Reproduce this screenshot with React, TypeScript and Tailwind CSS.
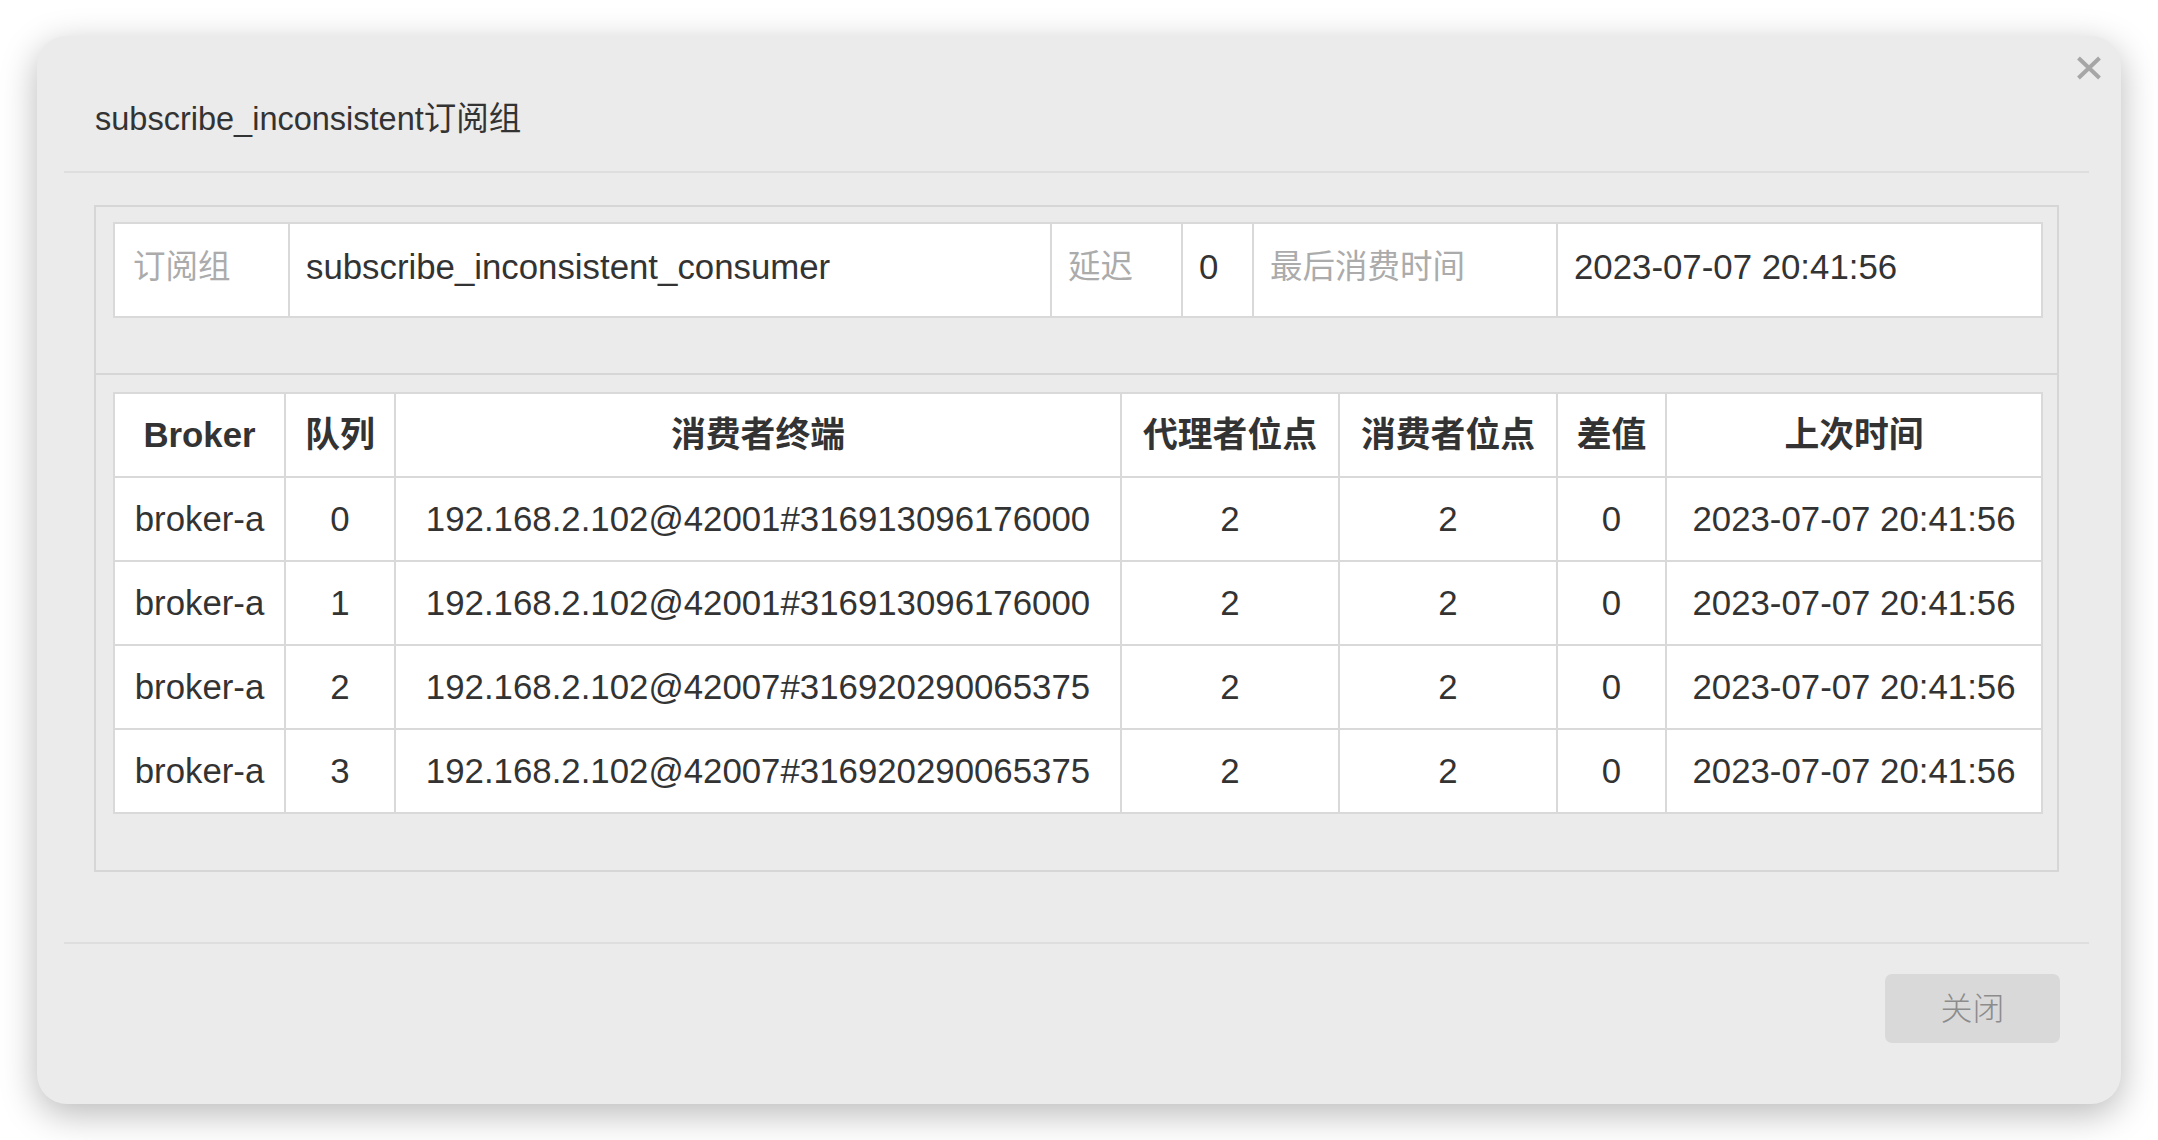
import React from "react";

const FONT = { fontFamily: '"Liberation Sans", Arial, "Noto Sans CJK SC", sans-serif' };

const rows = [
  { broker: "broker-a", q: "0", client: "192.168.2.102@42001#316913096176000" },
  { broker: "broker-a", q: "1", client: "192.168.2.102@42001#316913096176000" },
  { broker: "broker-a", q: "2", client: "192.168.2.102@42007#316920290065375" },
  { broker: "broker-a", q: "3", client: "192.168.2.102@42007#316920290065375" },
];

const headers = ["Broker", "队列", "消费者终端", "代理者位点", "消费者位点", "差值", "上次时间"];
const mainCols = [171, 110, 726, 218, 218, 109, 376];
const infoCols = [175, 762, 131, 71, 304, 485];

export default function App() {
  return (
    <div className="min-h-[1140px] w-[2158px] bg-white pt-[36px] pl-[37px] text-[#333333]" style={FONT}>
      <div className="relative w-[2084px] rounded-[30px] bg-[#ebebeb] pl-[27px] pr-[32px] shadow-[0_10px_36px_rgba(0,0,0,0.28)]">
        {/* close */}
        <button className="absolute top-[20px] right-[19px] flex h-[24px] w-[26px] items-center justify-center">
          <svg width="26" height="24" viewBox="0 0 26 24">
            <path d="M2.5 2 L23.5 22 M23.5 2 L2.5 22" stroke="#a6a6a6" strokeWidth="4" strokeLinecap="butt" />
          </svg>
        </button>

        {/* header */}
        <div className="h-[137px] border-b-2 border-[#dedede] pl-[31px] pt-[63px]">
          <div className="text-[32.5px] leading-[40px] text-[#333333]">subscribe_inconsistent订阅组</div>
        </div>

        {/* body */}
        <div className="px-[30px] pt-[32px] pb-[70px]">
          <div className="border-2 border-[#d6d6d6]">
            <div className="border-b-2 border-[#d6d6d6] px-[17px] pt-[15px] pb-[55px]">
              <table className="w-[1928px] table-fixed border-collapse bg-white text-[34.8px]">
                <colgroup>
                  {infoCols.map((w, i) => (
                    <col key={i} style={{ width: w }} />
                  ))}
                </colgroup>
                <tbody>
                  <tr className="h-[94px]">
                    <td className="border-2 border-[#d9d9d9] px-[18px] pb-[6px] text-[32.5px] text-[#ababab]">订阅组</td>
                    <td className="border-2 border-[#d9d9d9] px-[16px] pb-[6px]">subscribe_inconsistent_consumer</td>
                    <td className="border-2 border-[#d9d9d9] px-[16px] pb-[6px] text-[32.5px] text-[#ababab]">延迟</td>
                    <td className="border-2 border-[#d9d9d9] px-[16px] pb-[6px]">0</td>
                    <td className="border-2 border-[#d9d9d9] px-[16px] pb-[6px] text-[32.5px] text-[#ababab]">最后消费时间</td>
                    <td className="border-2 border-[#d9d9d9] px-[16px] pb-[6px]">2023-07-07 20:41:56</td>
                  </tr>
                </tbody>
              </table>
            </div>
            <div className="px-[17px] pt-[17px] pb-[56px]">
              <table className="w-[1928px] table-fixed border-collapse bg-white text-[34.8px]">
                <colgroup>
                  {mainCols.map((w, i) => (
                    <col key={i} style={{ width: w }} />
                  ))}
                </colgroup>
                <thead>
                  <tr className="h-[84px]">
                    {headers.map((h) => (
                      <th key={h} className="border-2 border-[#d9d9d9] px-[8px] text-center font-bold">
                        {h}
                      </th>
                    ))}
                  </tr>
                </thead>
                <tbody>
                  {rows.map((r, i) => (
                    <tr key={i} className="h-[84px] text-center">
                      <td className="border-2 border-[#d9d9d9]">{r.broker}</td>
                      <td className="border-2 border-[#d9d9d9]">{r.q}</td>
                      <td className="border-2 border-[#d9d9d9]">{r.client}</td>
                      <td className="border-2 border-[#d9d9d9]">2</td>
                      <td className="border-2 border-[#d9d9d9]">2</td>
                      <td className="border-2 border-[#d9d9d9]">0</td>
                      <td className="border-2 border-[#d9d9d9]">2023-07-07 20:41:56</td>
                    </tr>
                  ))}
                </tbody>
              </table>
            </div>
          </div>
        </div>

        {/* footer */}
        <div className="flex justify-end border-t-2 border-[#dedede] pt-[30px] pb-[61px] pr-[29px]">
          <button className="flex h-[69px] w-[175px] items-center justify-center rounded-[7px] bg-[#d9d9d9] text-[32px] font-light text-[#8c8c8c]">
            关闭
          </button>
        </div>
      </div>
    </div>
  );
}
